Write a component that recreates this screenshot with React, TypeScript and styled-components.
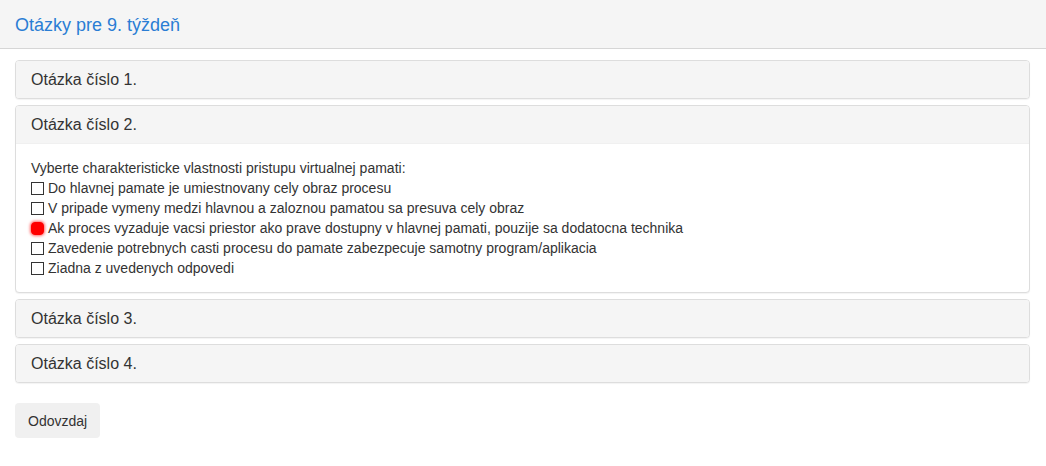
import React from 'react';
import styled, { createGlobalStyle } from 'styled-components';

const GlobalStyle = createGlobalStyle`
  * {
    box-sizing: border-box;
  }

  body {
    margin: 0;
    background: #ffffff;
    font-family: 'Liberation Sans', Arial, Helvetica, sans-serif;
    font-size: 14px;
    line-height: 20px;
    color: #333333;
  }
`;

const QUESTIONS = [
  { id: 1, title: 'Otázka číslo 1.' },
  { id: 2, title: 'Otázka číslo 2.' },
  { id: 3, title: 'Otázka číslo 3.' },
  { id: 4, title: 'Otázka číslo 4.' },
];

const OPTIONS = [
  { text: 'Do hlavnej pamate je umiestnovany cely obraz procesu', checked: false },
  { text: 'V pripade vymeny medzi hlavnou a zaloznou pamatou sa presuva cely obraz', checked: false },
  { text: 'Ak proces vyzaduje vacsi priestor ako prave dostupny v hlavnej pamati, pouzije sa dodatocna technika', checked: true },
  { text: 'Zavedenie potrebnych casti procesu do pamate zabezpecuje samotny program/aplikacia', checked: false },
  { text: 'Ziadna z uvedenych odpovedi', checked: false },
];

export default function App() {
  return (
    <>
      <GlobalStyle />
      <TopBar>
        <Title>Otázky pre 9. týždeň</Title>
      </TopBar>
      <Content>
        <PanelGroup>
          {QUESTIONS.map((q) => (
            <Panel key={q.id}>
              <PanelHeading $open={q.id === 2}>{q.title}</PanelHeading>
              {q.id === 2 && (
                <PanelBody>
                  <Prompt>Vyberte charakteristicke vlastnosti pristupu virtualnej pamati:</Prompt>
                  {OPTIONS.map((opt) => (
                    <Option key={opt.text}>
                      <Box $checked={opt.checked} />
                      {opt.text}
                    </Option>
                  ))}
                </PanelBody>
              )}
            </Panel>
          ))}
        </PanelGroup>
        <SubmitButton>Odovzdaj</SubmitButton>
      </Content>
    </>
  );
}

const TopBar = styled.header`
  height: 49px;
  background: #f5f5f5;
  border-bottom: 1px solid #d6d6d6;
  padding: 0 15px;
  display: flex;
  align-items: center;
`;

const Title = styled.h1`
  margin: 0;
  font-size: 18px;
  font-weight: 400;
  color: #2a7dd4;
  padding-top: 1px;
`;

const Content = styled.main`
  padding: 11px 16px 0 15px;
`;

const PanelGroup = styled.div`
  display: flex;
  flex-direction: column;
  gap: 6px;
  margin-bottom: 20px;
`;

const Panel = styled.section`
  border: 1px solid #dddddd;
  border-radius: 4px;
  background: #ffffff;
  box-shadow: 0 1px 1px rgba(0, 0, 0, 0.05);
  overflow: hidden;
`;

const PanelHeading = styled.div<{ $open: boolean }>`
  background: #f5f5f5;
  padding: 10px 15px 9px;
  font-size: 16px;
  line-height: 18px;
  color: #333333;
  border-bottom: ${(p) => (p.$open ? '1px solid #f0f0f0' : 'none')};
`;

const PanelBody = styled.div`
  padding: 14px 15px 14px;
`;

const Prompt = styled.div`
  line-height: 20px;
`;

const Option = styled.label`
  display: flex;
  align-items: center;
  gap: 4px;
  height: 20px;
`;

const Box = styled.span<{ $checked: boolean }>`
  width: 13px;
  height: 13px;
  flex: none;
  border: 1px solid ${(p) => (p.$checked ? '#ff0000' : '#333333')};
  background: ${(p) => (p.$checked ? '#ff0000' : '#ffffff')};
  border-radius: ${(p) => (p.$checked ? '4px' : '0')};
  box-shadow: ${(p) => (p.$checked ? '0 0 3px 1px rgba(255, 0, 0, 0.6)' : 'none')};
  margin-top: 1px;
`;

const SubmitButton = styled.button`
  font-family: 'Liberation Sans', Arial, Helvetica, sans-serif;
  font-size: 14px;
  line-height: 20px;
  color: #333333;
  background: #f0f0f0;
  border: none;
  border-radius: 4px;
  padding: 8px 13px 7px;
  cursor: pointer;
`;
